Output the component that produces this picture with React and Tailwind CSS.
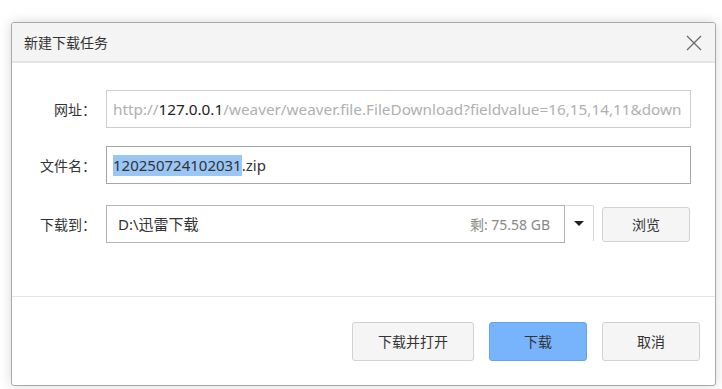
import React from "react"

const font = { fontFamily: '"Noto Sans", "Noto Sans CJK SC", sans-serif' }

const Label = ({ children }) => (
  <div className="w-[72px] ml-[12px] mr-[10px] text-right text-[14px] text-[#333]">{children}</div>
)

export default function App() {
  return (
    <div className="min-h-screen bg-white pt-[22px] pl-[11px]" style={font}>
      <div className="w-[705px] h-[364px] flex flex-col bg-white border border-[#a9a9a9] rounded-[3px] shadow-[0_0_12px_rgba(0,0,0,0.16)] overflow-hidden">
        {/* title bar */}
        <div className="h-[40px] flex items-center justify-between bg-[#f4f4f4] border-b-2 border-[#e4e4e4] pl-[12px] pr-[13px]">
          <span className="text-[14px] text-[#333]">新建下载任务</span>
          <svg width="16" height="16" viewBox="0 0 16 16" className="mt-[1px]">
            <path d="M1 1 L15 15 M15 1 L1 15" stroke="#6b6b6b" strokeWidth="1.3" fill="none" />
          </svg>
        </div>

        {/* body */}
        <div className="h-[234px] flex flex-col pt-[27px] border-b border-[#e4e4e4]">
          <div className="flex items-center">
            <Label>网址：</Label>
            <div className="w-[585px] h-[38px] flex items-center border border-[#cdcdcd] pl-[6px] overflow-hidden whitespace-nowrap text-[15.3px] text-[#b0b0b0]">
              http://<span className="text-[#222]">127.0.0.1</span>/weaver/weaver.file.FileDownload?fieldvalue=16,15,14,11&amp;down
            </div>
          </div>

          <div className="flex items-center mt-[18px]">
            <Label>文件名：</Label>
            <div className="w-[585px] h-[38px] flex items-center border border-[#a6a6a6] pl-[6px] whitespace-nowrap text-[15px] text-[#333]">
              <span className="bg-[#99c6f5] leading-[21px]">120250724102031</span>.zip
            </div>
          </div>

          <div className="flex items-center mt-[21px]">
            <Label>下载到：</Label>
            <div className="w-[459px] h-[38px] flex items-center justify-between border border-[#b2b2b2] pl-[11px] pr-[14px] text-[15px] text-[#333]">
              <span>D:\迅雷下载</span>
              <span className="text-[14px] text-[#888]">剩: 75.58 GB</span>
            </div>
            <div className="w-[29px] h-[36px] self-start flex items-center justify-center border-t border-r border-[#d6d6d6] rounded-tr-[2px]">
              <svg width="10" height="6" viewBox="0 0 10 6">
                <path d="M0 0 L10 0 L5 5 Z" fill="#222" />
              </svg>
            </div>
            <button className="ml-[8px] w-[88px] h-[35px] bg-[#f5f5f5] border border-[#d2d2d2] rounded-[3px] text-[14px] text-[#333]">
              浏览
            </button>
          </div>
        </div>

        {/* footer */}
        <div className="flex-1 flex justify-end items-start pt-[25px] pr-[15px] gap-[15px]">
          <button className="w-[122px] h-[39px] bg-[#f5f5f5] border border-[#d2d2d2] rounded-[3px] text-[14px] text-[#333]">
            下载并打开
          </button>
          <button className="w-[98px] h-[39px] bg-[#78b4fb] border border-[#63a3f2] rounded-[3px] text-[14px] text-[#333]">
            下载
          </button>
          <button className="w-[98px] h-[39px] bg-[#f5f5f5] border border-[#d2d2d2] rounded-[3px] text-[14px] text-[#333]">
            取消
          </button>
        </div>
      </div>
    </div>
  )
}
